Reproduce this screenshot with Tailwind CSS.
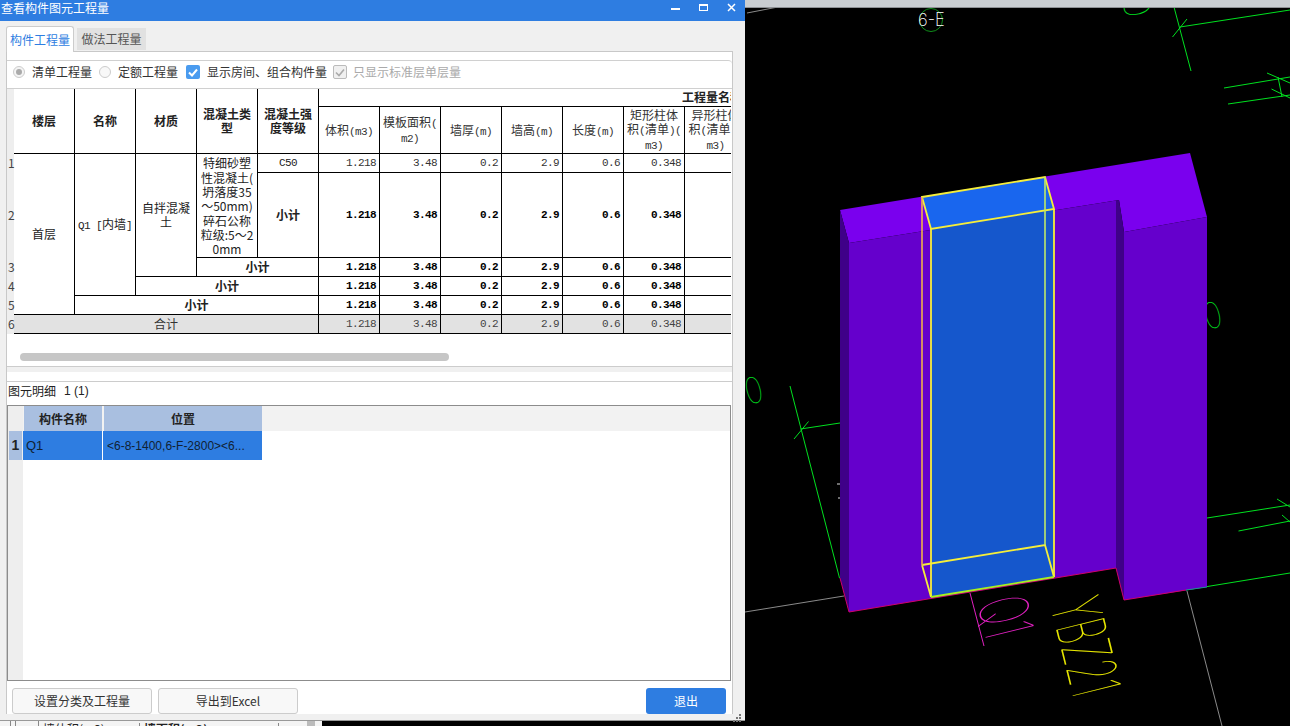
<!DOCTYPE html>
<html lang="zh-CN">
<head>
    <meta charset="UTF-8">
    <meta name="viewport" content="width=device-width, initial-scale=1.0">
    <title>查看构件图元工程量</title>
    <script src="https://cdn.jsdelivr.net/npm/@tailwindcss/browser@4"></script>
</head>
<body class="bg-black overflow-hidden">
<div class="flex w-[1290px] h-[726px] overflow-hidden bg-black font-['Noto_Sans_CJK_SC','Liberation_Sans',sans-serif] text-[12px] text-[#222]">

    <!-- left: dialog + sliver of the window behind it -->
    <div class="w-[745px] h-[726px] shrink-0 flex flex-col">
        <div class="h-[721px] flex flex-col bg-[#f0f0f0] border-b border-[#999]">
            <div class="h-[21px] shrink-0 bg-[#2e7de1] flex items-center text-white pl-px pb-[5px]">
                <span class="flex-1 leading-none">查看构件图元工程量</span>
                <svg width="80" height="21" viewBox="0 0 80 21" class="mt-[5px] shrink-0">
                    <rect x="6" y="8" width="9" height="2" fill="#fff"/>
                    <rect x="34.5" y="4.5" width="8" height="6" fill="none" stroke="#fff"/>
                    <rect x="34" y="4" width="9" height="2" fill="#fff"/>
                    <path d="M63 4l7 7M70 4l-7 7" stroke="#fff" stroke-width="1.5"/>
                </svg>
            </div>

            <!-- tabs -->
            <div class="h-[30px] shrink-0 pl-[6px] flex items-end gap-[3px] relative">
                <div class="h-[26px] w-[68px] -mb-px z-10 bg-white border border-b-0 border-[#ccc] rounded-t-[3px] text-[#2e7de1] flex items-center justify-center">构件工程量</div>
                <div class="h-[22px] w-[69px] mb-px bg-[#e1e1e1] text-[#555] flex items-center justify-center">做法工程量</div>
            </div>

            <div class="ml-[6px] w-[727px] h-[663px] bg-white border-t border-l border-r border-[#c8c8c8] flex flex-col">
                <!-- upper panel -->
                <div class="h-[315px] shrink-0 border-b border-[#ccc] flex flex-col">
                    <div class="mt-[8px] h-[29px] shrink-0 border-t border-b border-[#d0d0d0] rounded-tr-[4px] flex items-center pb-[5px] text-[#333]">
                        <span class="w-[12px] h-[12px] ml-[6px] rounded-full border border-[#ccc] bg-[#f4f4f4] flex items-center justify-center"><span class="w-[6px] h-[6px] rounded-full bg-[#aaa]"></span></span>
                        <span class="ml-[7px]">清单工程量</span>
                        <span class="w-[12px] h-[12px] ml-[7px] rounded-full border border-[#ccc] bg-[#f8f8f8]"></span>
                        <span class="ml-[7px]">定额工程量</span>
                        <span class="w-[14px] h-[14px] ml-[8px] rounded-[2px] bg-[#4a9bef] flex items-center justify-center">
                            <svg width="10" height="9" viewBox="0 0 10 9"><path d="M1 4.5l3 3 5-6" fill="none" stroke="#fff" stroke-width="2"/></svg>
                        </span>
                        <span class="ml-[7px]">显示房间、组合构件量</span>
                        <span class="w-[14px] h-[14px] ml-[6px] rounded-[2px] border border-[#bbb] bg-[#f0f0f0] flex items-center justify-center">
                            <svg width="10" height="9" viewBox="0 0 10 9"><path d="M1 4.5l3 3 5-6" fill="none" stroke="#aaa" stroke-width="1.6"/></svg>
                        </span>
                        <span class="ml-[6px] text-[#aaa]">只显示标准层单层量</span>
                    </div>

                    <!-- quantity table, cut off by the panel on the right -->
                    <div class="h-[277px] w-[724px] overflow-hidden relative">
                        <table id="qty" class="table-fixed border-separate border-spacing-0 w-[434px] text-center leading-[14.3px]">
                            <colgroup>
                                <col class="w-[7px]"><col class="w-[61px]"><col class="w-[61px]"><col class="w-[61px]"><col class="w-[61px]"><col class="w-[61px]">
                                <col class="w-[61px]"><col class="w-[61px]"><col class="w-[61px]"><col class="w-[61px]"><col class="w-[61px]"><col class="w-[61px]"><col class="w-[61px]">
                            </colgroup>
                            <thead>
                                <tr class="h-[18px]">
                                    <th rowspan="2" class="p-0 bg-[#eeeeee]"></th>
                                    <th rowspan="2" class="p-0 border-r border-b border-black">楼层</th>
                                    <th rowspan="2" class="p-0 border-r border-b border-black">名称</th>
                                    <th rowspan="2" class="p-0 border-r border-b border-black">材质</th>
                                    <th rowspan="2" class="p-0 border-r border-b border-black">混凝土类<br>型</th>
                                    <th rowspan="2" class="p-0 border-r border-b border-black">混凝土强<br>度等级</th>
                                    <th colspan="7" class="p-0 border-b border-black text-left pl-[363px] whitespace-nowrap overflow-hidden">工程量名称</th>
                                </tr>
                                <tr class="h-[47px] font-normal text-[#333]">
                                    <td class="p-0 border-r border-b border-black">体积<span class="font-['Liberation_Mono'] text-[11px] leading-none tracking-[-0.6px]">(m3)</span></td>
                                    <td class="p-0 border-r border-b border-black">模板面积<span class="font-['Liberation_Mono'] text-[11px] leading-none tracking-[-0.6px]">(<br>m2)</span></td>
                                    <td class="p-0 border-r border-b border-black">墙厚<span class="font-['Liberation_Mono'] text-[11px] leading-none tracking-[-0.6px]">(m)</span></td>
                                    <td class="p-0 border-r border-b border-black">墙高<span class="font-['Liberation_Mono'] text-[11px] leading-none tracking-[-0.6px]">(m)</span></td>
                                    <td class="p-0 border-r border-b border-black">长度<span class="font-['Liberation_Mono'] text-[11px] leading-none tracking-[-0.6px]">(m)</span></td>
                                    <td class="p-0 border-r border-b border-black">矩形柱体<br>积<span class="font-['Liberation_Mono'] text-[11px] leading-none tracking-[-0.6px]">(</span>清单<span class="font-['Liberation_Mono'] text-[11px] leading-none tracking-[-0.6px]">)(<br>m3)</span></td>
                                    <td class="p-0 border-b border-black whitespace-nowrap">异形柱体<br>积<span class="font-['Liberation_Mono'] text-[11px] leading-none tracking-[-0.6px]">(</span>清单<span class="font-['Liberation_Mono'] text-[11px] leading-none tracking-[-0.6px]">)(<br>m3)</span></td>
                                </tr>
                            </thead>
                            <tbody>
                                <tr class="h-[19px]" data-nums="normal">
                                    <td class="p-0 pl-px bg-[#eeeeee] text-left text-[#444]">1</td>
                                    <td rowspan="5" class="p-0 border-r border-b border-black">首层</td>
                                    <td rowspan="4" class="p-0 border-r border-b border-black whitespace-nowrap"><span class="font-['Liberation_Mono'] text-[11px] leading-none tracking-[-0.6px]">Q1 [</span>内墙<span class="font-['Liberation_Mono'] text-[11px] leading-none tracking-[-0.6px]">]</span></td>
                                    <td rowspan="3" class="p-0 border-r border-b border-black">自拌混凝<br>土</td>
                                    <td rowspan="2" class="p-0 pt-[2px] border-r border-b border-black whitespace-nowrap">特细砂塑<br>性混凝土(<br>坍落度35<br>～50mm)<br>碎石公称<br>粒级:5～2<br>0mm</td>
                                    <td class="p-0 pt-px border-r border-b border-black font-['Liberation_Mono'] text-[11px] tracking-[-0.6px]">C50</td>
                                </tr>
                                <tr class="h-[85px]" data-nums="bold">
                                    <td class="p-0 pl-px bg-[#eeeeee] text-left text-[#444]">2</td>
                                    <td class="p-0 border-r border-b border-black font-bold">小计</td>
                                </tr>
                                <tr class="h-[19px]" data-nums="bold">
                                    <td class="p-0 pl-px bg-[#eeeeee] text-left text-[#444]">3</td>
                                    <td colspan="2" class="p-0 border-r border-b border-black font-bold">小计</td>
                                </tr>
                                <tr class="h-[19px]" data-nums="bold">
                                    <td class="p-0 pl-px bg-[#eeeeee] text-left text-[#444]">4</td>
                                    <td colspan="3" class="p-0 border-r border-b border-black font-bold">小计</td>
                                </tr>
                                <tr class="h-[19px]" data-nums="bold">
                                    <td class="p-0 pl-px bg-[#eeeeee] text-left text-[#444]">5</td>
                                    <td colspan="4" class="p-0 border-r border-b border-black font-bold">小计</td>
                                </tr>
                                <tr class="h-[19px]" data-nums="total">
                                    <td class="p-0 pl-px bg-[#eeeeee] text-left text-[#444]">6</td>
                                    <td colspan="5" class="p-0 border-r border-b border-black bg-[#e2e2e2] text-[#333]">合计</td>
                                </tr>
                            </tbody>
                        </table>
                        <div class="absolute left-[13px] top-[264px] w-[429px] h-[8px] rounded-full bg-[#c6c6c6]"></div>
                    </div>
                </div>

                <div class="h-[5px] shrink-0 bg-[#f0f0f0]"></div>

                <!-- lower panel -->
                <div class="mt-[9px] flex-1 border-t border-[#ccc] flex flex-col">
                    <div class="h-[23px] shrink-0 flex items-center pl-px pb-[5px]">图元明细<span class="ml-[8px] font-['Liberation_Sans']">1 (1)</span></div>
                    <div class="mr-px h-[276px] shrink-0 border border-[#8c8c8c] flex bg-white">
                        <div class="w-[15px] shrink-0 bg-[#eeeeee] flex flex-col">
                            <div class="h-[25px]"></div>
                            <div class="h-[29px] mx-px bg-[#a9bfe0] font-['Liberation_Sans'] font-bold text-[14px] flex items-center justify-center">1</div>
                        </div>
                        <div class="flex-1 flex flex-col">
                            <div class="h-[25px] bg-[#f2f2f2] flex">
                                <div class="w-[78px] ml-px bg-[#a9bfe0] font-bold flex items-center justify-center">构件名称</div>
                                <div class="w-[158px] ml-[2px] bg-[#a9bfe0] font-bold flex items-center justify-center">位置</div>
                            </div>
                            <div class="h-[29px] flex font-['Liberation_Sans']">
                                <div class="w-[80px] bg-[#2e7de1] border-r border-white pl-[3px] text-[13px] text-[#123] flex items-center">Q1</div>
                                <div class="w-[159px] bg-[#2e7de1] pl-[4px] text-[#123] flex items-center whitespace-nowrap">&lt;6-8-1400,6-F-2800&gt;&lt;6...</div>
                            </div>
                        </div>
                    </div>
                    <div class="flex-1 flex items-start pt-[7px] pl-[5px] text-[#333]">
                        <div class="w-[140px] h-[26px] bg-[#f8f8f8] border border-[#ccc] rounded-[3px] flex items-center justify-center">设置分类及工程量</div>
                        <div class="w-[140px] h-[26px] ml-[6px] bg-[#f8f8f8] border border-[#ccc] rounded-[3px] flex items-center justify-center">导出到Excel</div>
                        <div class="w-[80px] h-[26px] ml-[348px] bg-[#2e7de1] rounded-[3px] text-white flex items-center justify-center">退出</div>
                    </div>
                </div>
            </div>
            <div class="flex-1 flex justify-end items-end pr-[3px] pb-[2px]">
                <svg width="9" height="9" viewBox="0 0 9 9" fill="#777"><rect x="6" y="0" width="2" height="2"/><rect x="3" y="3" width="2" height="2"/><rect x="6" y="3" width="2" height="2"/><rect x="0" y="6" width="2" height="2"/><rect x="3" y="6" width="2" height="2"/><rect x="6" y="6" width="2" height="2"/></svg>
            </div>
        </div>
        <!-- window behind the dialog -->
        <div class="w-[322px] h-[5px] bg-[#f4f4f4] flex overflow-hidden leading-[12px] text-[#222]">
            <span class="w-[11px] border-r border-[#888]"></span>
            <span class="w-[5px] border-r border-[#888]"></span>
            <span class="w-[23px] border-r border-[#888]"></span>
            <span class="w-[101px] border-r border-[#888] pl-[4px] whitespace-nowrap mt-[2px]">墙体积(m3)</span>
            <span class="w-[139px] border-r border-[#888] pl-[4px] whitespace-nowrap mt-[2px] font-bold">墙面积(m2)</span>
            <span class="w-[28px]"></span>
            <span class="w-[8px] bg-[#bbb]"></span>
        </div>
    </div>

    <!-- right: 3D model viewport -->
    <svg width="545" height="726" viewBox="745 0 545 726" class="shrink-0" style="font-family:Inter,'Liberation Sans',sans-serif">
        <g fill="none" stroke="#00e020" stroke-width="1">
            <path d="M1174 7L1191 71M1172.5 37L1187 19M1180 27L1290 10"/>
            <path d="M1224 88L1290 77M1228 104L1290 95M1267 73L1290 83M1271.5 89L1290 98M1278 77L1282 97"/>
            <path d="M790 386L839.5 578M794 439L808.5 421.5M800.5 429L840 423"/>
            <path d="M1207 518L1290 505M1238.5 531L1290 521M1277 499L1290 507M1282 515L1290 522M1186 590L1290 573"/>
        </g>
        <path d="M745 612L844 596M1187 591L1222 726M747 13L778 7" stroke="#8a8a8a" stroke-width="1" fill="none"/>
        <path d="M837 484h3M838 498h2" stroke="#ddd" fill="none"/>

        <!-- CAD labels -->
        <g fill="#00e020" font-weight="100" font-size="36">
            <text transform="translate(748 405) rotate(-14) scale(.85 1)">0</text>
            <text transform="translate(1207 330) rotate(-14) scale(.85 1)">0</text>
            <text transform="translate(1137 6.5) rotate(76)" text-anchor="middle" y="13">0</text>
        </g>
        <circle cx="931" cy="20" r="11.5" fill="none" stroke="#0f8f1a"/>
        <text transform="translate(918 26) scale(.92 1)" font-size="18" font-weight="200" fill="#fff">6-E</text>
        <text transform="translate(1050 605) rotate(76) scale(.5 1)" font-size="68" font-weight="100" fill="#e6e600">YBZ21</text>
        <text transform="translate(977 603) rotate(76) scale(.53 1)" font-size="68" font-weight="100" fill="#e020c0">Q1</text>
        <path d="M970 593L984 646" stroke="#e020c0" fill="none"/>

        <!-- wall -->
        <polygon points="840,210 1190,153 1207,217 1124,232 1119,200 849,243" fill="#7a00ee"/>
        <polygon points="840,210 849,243 849,612 840,578" fill="#3f0088"/>
        <polygon points="849,243 1119,200 1116,201 1116,568 849,612" fill="#6500cc"/>
        <polygon points="1116,200.5 1119,200 1124,232 1124,600 1116,568" fill="#3f0088"/>
        <polygon points="1124,232 1207,217 1207,587 1124,600" fill="#6500cc"/>
        <path d="M840 578L849 612L1116 568L1124 600L1186 590" fill="none" stroke="#d0006a" stroke-width="1"/>
        <path d="M1186 590L1207 587" fill="none" stroke="#1c8f8f" stroke-width="1"/>

        <!-- selected element -->
        <polygon points="922,197 1045,177 1054,209 931,229" fill="#1966ee"/>
        <polygon points="931,229 1054,209 1054,577 931,597" fill="#1557cc"/>
        <g fill="none" stroke="#f5ee3a" stroke-width="1.8">
            <path d="M922 197L1045 177L1054 209L931 229Z"/>
            <path d="M931 229V597M1054 209V577"/>
            <path d="M922 565L1045 545L1054 577M922 565L931 597"/>
        </g>
        <path d="M922 197V565" stroke="#f2b04a" stroke-width="1.6" fill="none"/>
        <path d="M1045 177V545" stroke="#bde86a" stroke-width="1.6" fill="none"/>
        <path d="M931 597L1054 577" stroke="#a8f020" stroke-width="1.8" fill="none"/>

        <rect x="745" y="0" width="545" height="7" fill="#c9cdd1"/>
        <rect x="745" y="7" width="545" height="1" fill="#8d9094"/>
    </svg>
</div>
<script>
    // the six quantity columns repeat on every body row, only the weight changes
    const values = ["1.218", "3.48", "0.2", "2.9", "0.6", "0.348"];
    const rowStyles = {
        normal: "p-0 pr-[3px] pt-px border-r border-b border-black text-right font-['Liberation_Mono'] text-[11px] tracking-[-0.6px] text-[#333]",
        bold: "p-0 pr-[3px] pt-px border-r border-b border-black text-right font-['Liberation_Mono'] text-[11px] tracking-[-0.6px] font-bold text-black",
        total: "p-0 pr-[3px] pt-px border-r border-b border-black text-right font-['Liberation_Mono'] text-[11px] tracking-[-0.6px] bg-[#e2e2e2] text-[#444]"
    };
    const lastStyles = {
        normal: "p-0 border-b border-black",
        bold: "p-0 border-b border-black",
        total: "p-0 border-b border-black bg-[#e2e2e2]"
    };
    document.querySelectorAll("#qty tr[data-nums]").forEach(row => {
        const kind = row.dataset.nums;
        values.forEach(v => {
            const td = document.createElement("td");
            td.className = rowStyles[kind];
            td.textContent = v;
            row.appendChild(td);
        });
        const last = document.createElement("td");
        last.className = lastStyles[kind];
        row.appendChild(last);
    });
</script>
</body>
</html>
